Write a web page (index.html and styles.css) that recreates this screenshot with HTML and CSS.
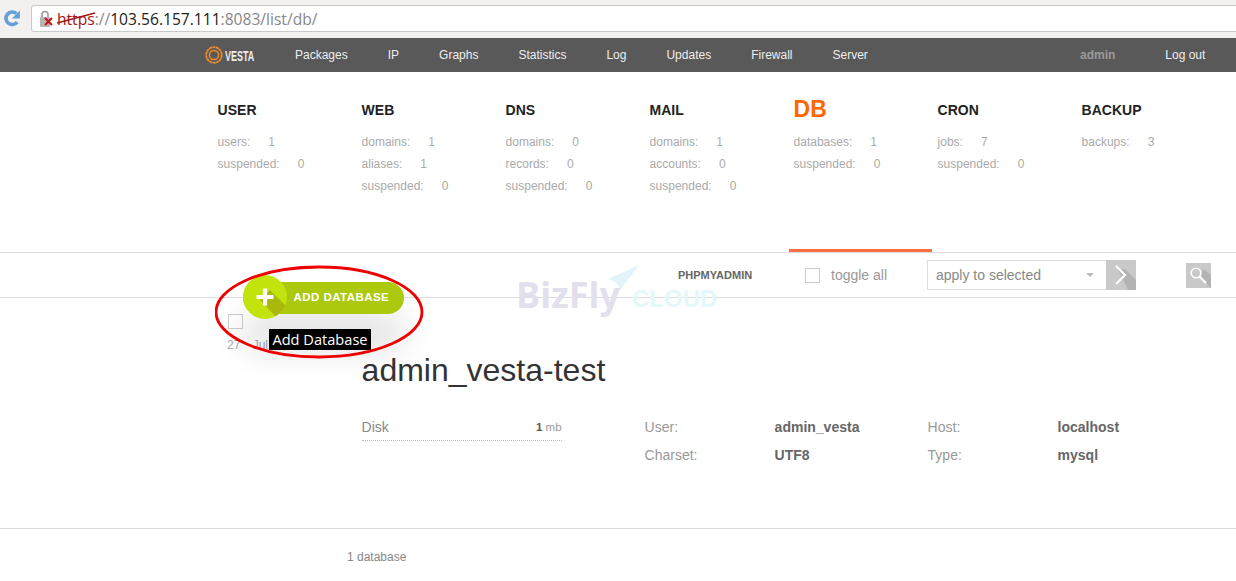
FILE: index.html
```html
<!DOCTYPE html>
<html lang="en">
<head>
<meta charset="utf-8">
<title>Vesta - DB</title>
<link rel="stylesheet" href="styles.css">
</head>
<body>
<div class="browser">
  <svg class="reload" width="18" height="18" viewBox="0 0 18 18"><path d="M14.200 13.200A6.300 6.300 0 1 1 13.400 4.600" fill="none" stroke="#659fd8" stroke-width="3.600"/><path d="M16.800 1.500V9.500H9z" fill="#659fd8"/></svg>
  <div class="address">
    <svg class="lock" width="17" height="18" viewBox="0 0 17 18"><rect x="1" y="7" width="10" height="10" rx="1" fill="#b5b5b5"/><path d="M3 7V4.500a3 3 0 0 1 6 0V7" fill="none" stroke="#9a9a9a" stroke-width="1.600"/><path d="M6 8l7 7M13 8l-7 7" stroke="#cc1111" stroke-width="2"/></svg>
    <span class="scheme">https<svg class="strike" width="40" height="14" viewBox="0 0 40 14"><path d="M0 12L38 2" stroke="#a31515" stroke-width="1.500"/></svg></span><span class="url-dim">://</span><span class="url-host">103.56.157.111</span><span class="url-dim">:8083/list/db/</span>
  </div>
</div>
<nav class="nav">
  <div class="logo">
    <svg width="18" height="18" viewBox="0 0 18 18"><circle cx="9" cy="9" r="7.800" fill="none" stroke="#f28c28" stroke-width="1.800" stroke-dasharray="3 .5"/><circle cx="9" cy="9" r="4.600" fill="none" stroke="#f28c28" stroke-width="1.500"/></svg>
    <span class="logo-text">VESTA</span>
  </div>
  <div class="nav-links">
    <a>Packages</a><a>IP</a><a>Graphs</a><a>Statistics</a><a>Log</a><a>Updates</a><a>Firewall</a><a>Server</a>
  </div>
  <div class="nav-user">
    <a class="nav-admin">admin</a><a>Log out</a>
  </div>
</nav>
<section class="stats">
  <div class="stat"><h2>USER</h2><p>users:<b>1</b></p><p>suspended:<b>0</b></p></div>
  <div class="stat"><h2>WEB</h2><p>domains:<b>1</b></p><p>aliases:<b>1</b></p><p>suspended:<b>0</b></p></div>
  <div class="stat"><h2>DNS</h2><p>domains:<b>0</b></p><p>records:<b>0</b></p><p>suspended:<b>0</b></p></div>
  <div class="stat"><h2>MAIL</h2><p>domains:<b>1</b></p><p>accounts:<b>0</b></p><p>suspended:<b>0</b></p></div>
  <div class="stat stat-active"><h2>DB</h2><p>databases:<b>1</b></p><p>suspended:<b>0</b></p></div>
  <div class="stat"><h2>CRON</h2><p>jobs:<b>7</b></p><p>suspended:<b>0</b></p></div>
  <div class="stat"><h2>BACKUP</h2><p>backups:<b>3</b></p></div>
</section>
<section class="toolbar">
  <a class="pma">PHPMYADMIN</a>
  <label class="toggle"><span class="check"></span>toggle all</label>
  <div class="apply">
    <div class="select">apply to selected<span class="caret"></span></div>
    <div class="go"><svg width="30" height="30" viewBox="0 0 30 30"><path d="M12 10L22 30H30V20L19 9z" fill="#b3b3b3"/><path d="M10 6l9 9-9 9" fill="none" stroke="#fff" stroke-width="2.200"/></svg></div>
  </div>
  <div class="search"><svg width="25" height="25" viewBox="0 0 25 25"><path d="M15 15L25 25V12L17 6z" fill="#b3b3b3"/><circle cx="10" cy="10" r="4.800" fill="none" stroke="#fff" stroke-width="1.600"/><path d="M13.500 13.500L20 20" stroke="#fff" stroke-width="2.200"/></svg></div>
</section>
<section class="row">
  <div class="row-side">
    <span class="check"></span>
    <div class="date">27 <span class="date-month">Jul</span></div>
  </div>
  <div class="row-main">
    <h1>admin_vesta-test</h1>
    <div class="details">
      <div class="disk"><span class="disk-label">Disk</span><span class="disk-val"><b>1</b> mb</span></div>
      <dl class="info">
        <dt>User:</dt><dd>admin_vesta</dd><dt>Host:</dt><dd>localhost</dd>
        <dt>Charset:</dt><dd>UTF8</dd><dt>Type:</dt><dd>mysql</dd>
      </dl>
    </div>
  </div>
</section>
<footer class="foot">1 database</footer>

<div class="watermark">
  <svg class="plane" width="32" height="28" viewBox="0 0 32 28"><path d="M31 0L0 14l9 4 3 7 4-5z" fill="#e2f4fa"/></svg>
  <span class="wm-biz">BizFly</span><span class="wm-cloud">CLOUD</span>
</div>
<div class="add-btn">
  <span class="add-label">ADD DATABASE</span>
  <span class="add-circle"><svg width="44" height="44" viewBox="0 0 44 44"><path d="M17 25L27 15 L44 32 A22 22 0 0 1 33 42z" fill="#a8b90c"/><path d="M22 13.500V30.500M13.500 22H30.500" stroke="#fff" stroke-width="4.200"/></svg></span>
</div>
<div class="tooltip">Add Database</div>
<svg class="annotation" width="212" height="96" viewBox="0 0 212 96"><ellipse cx="104" cy="47" rx="103" ry="45" fill="none" stroke="#ee0000" stroke-width="2.800"/></svg>
</body>
</html>
```
FILE: styles.css
```css
* { box-sizing: border-box; }
html, body { margin: 0; padding: 0; }
body {
  position: relative;
  width: 1236px;
  height: 581px;
  overflow: hidden;
  background: #fff;
  font-family: "Liberation Sans", Arial, sans-serif;
  color: #333;
}
h1, h2, p, dl, dd { margin: 0; }

.browser {
  height: 38px;
  background: #f2f1f0;
  display: flex;
  align-items: flex-start;
  padding: 5px 0 0 3px;
  gap: 10px;
}
.reload { flex: none; margin-top: 4px; }
.address {
  flex: 1;
  height: 27px;
  background: #fff;
  border: 1px solid #c9c9c9;
  border-right: none;
  border-radius: 3px 0 0 3px;
  display: flex;
  align-items: center;
  padding-left: 7px;
  font-family: "Open Sans", sans-serif;
  font-size: 15.600px;
}
.lock { flex: none; margin-right: 1px; }
.scheme { position: relative; color: #a31515; }
.strike { position: absolute; left: 0; top: 3px; }
.url-dim { color: #888; }
.url-host { color: #222; }

.nav {
  height: 34px;
  background: #595959;
  display: flex;
  align-items: center;
  padding-left: 205px;
  font-size: 12px;
  color: #eee;
}
.logo { width: 90px; display: flex; align-items: center; gap: 2px; }
.logo-text {
  font-size: 15px;
  font-weight: bold;
  color: #eee;
  display: inline-block;
  transform: scaleX(.6);
  transform-origin: left;
}
.nav-links { display: flex; gap: 40px; width: 785px; }
.nav-user { display: flex; gap: 50px; }
.nav-admin { color: #999; font-weight: bold; }

.stats {
  height: 180px;
  padding: 28px 0 0 217.600px;
  display: grid;
  grid-template-columns: repeat(7, 144px);
}
.stat { position: relative; }
.stat h2 { font-size: 14px; line-height: 20px; color: #222; margin-bottom: 11px; }
.stat p { font-size: 12px; line-height: 22px; color: #aaa; }
.stat b { font-weight: normal; margin-left: 18px; color: #aaa; }
.stat-active h2 { font-size: 23px; color: #ff6701; line-height: 19px; margin-bottom: 12px; }
.stat-active::after {
  content: "";
  position: absolute;
  left: -5px;
  bottom: 0;
  width: 143px;
  height: 3px;
  background: #ff6e42;
}

.toolbar {
  height: 46px;
  border-top: 1px solid #ddd;
  border-bottom: 1px solid #ddd;
  position: relative;
  display: flex;
  align-items: center;
  padding-left: 678px;
}
.pma { font-size: 11px; font-weight: bold; color: #666; width: 127px; }
.toggle { display: flex; align-items: center; width: 122px; font-size: 14px; color: #999; }
.check { display: block; width: 15px; height: 15px; border: 1px solid #ccc; background: #fff; }
.toggle .check { margin-right: 11px; }
.apply { display: flex; width: 259px; }
.select {
  width: 179px;
  height: 30px;
  border: 1px solid #ddd;
  border-right: none;
  font-size: 14px;
  line-height: 28px;
  padding-left: 8px;
  color: #888;
  position: relative;
}
.caret {
  position: absolute;
  right: 12px;
  top: 12px;
  border: 4px solid transparent;
  border-top-color: #bbb;
}
.go { width: 30px; height: 30px; background: #c9c9c9; overflow: hidden; }
.go svg, .search svg { display: block; }
.search { width: 25px; height: 25px; background: #c9c9c9; overflow: hidden; }

.row { display: flex; height: 231px; border-bottom: 1px solid #ddd; }
.row-side { width: 133.600px; padding: 16px 0 0 0; margin-left: 228px; }
.date { font-size: 12px; color: #aaa; margin: 9px 0 0 -1px; }
.date-month { margin-left: 9px; color: #9fa6c0; }
.row-main { flex: 1; padding-top: 52px; }
.row-main h1 { font-size: 32px; font-weight: normal; line-height: 40px; color: #333; }
.details { display: flex; margin-top: 24px; }
.disk {
  width: 200px;
  height: 27px;
  border-bottom: 1px dotted #bbb;
  display: flex;
  justify-content: space-between;
  align-items: center;
  margin-right: 83px;
}
.disk-label { font-size: 14px; color: #888; }
.disk-val { font-size: 11.500px; color: #999; }
.disk-val b { color: #555; }
.info {
  display: grid;
  grid-template-columns: 130px 153px 130px auto;
  grid-auto-rows: 28px;
  font-size: 14px;
  line-height: 27px;
}
.info dt { color: #999; }
.info dd { color: #666; font-weight: bold; }

.foot { font-size: 12px; color: #888; padding: 21px 0 0 347px; }

.watermark { position: absolute; left: 517px; top: 265px; width: 210px; height: 55px; }
.plane { position: absolute; left: 91px; top: 0; }
.wm-biz { position: absolute; left: -1px; top: 8px; font-size: 36px; font-weight: bold; color: #e3e0ed; font-family: "Open Sans", sans-serif; line-height: 44px; }
.wm-cloud { position: absolute; left: 115px; top: 21px; font-size: 24px; font-weight: bold; color: #e4f7fb; line-height: 26px; }

.add-btn {
  position: absolute;
  left: 243px;
  top: 275px;
  width: 161px;
  height: 44px;
}
.add-label {
  position: absolute;
  left: 0;
  top: 7px;
  width: 161px;
  height: 32px;
  border-radius: 16px;
  background: #adc90d;
  color: #fff;
  font-size: 11.500px;
  letter-spacing: .45px;
  font-weight: bold;
  line-height: 30px;
  padding-left: 50.500px;
  box-shadow: 0 34px 34px rgba(0,0,0,.14);
}
.add-circle {
  position: absolute;
  left: 0;
  top: 0;
  width: 44px;
  height: 44px;
  border-radius: 50%;
  background: #c2e40c;
  overflow: hidden;
}
.add-circle svg { display: block; }
.tooltip {
  position: absolute;
  left: 269px;
  top: 329px;
  width: 102px;
  height: 21px;
  background: #000;
  color: #fff;
  font-family: "Open Sans", sans-serif;
  font-size: 14.600px;
  line-height: 21px;
  text-align: center;
  white-space: nowrap;
}
.annotation { position: absolute; left: 215px; top: 265px; }
```
